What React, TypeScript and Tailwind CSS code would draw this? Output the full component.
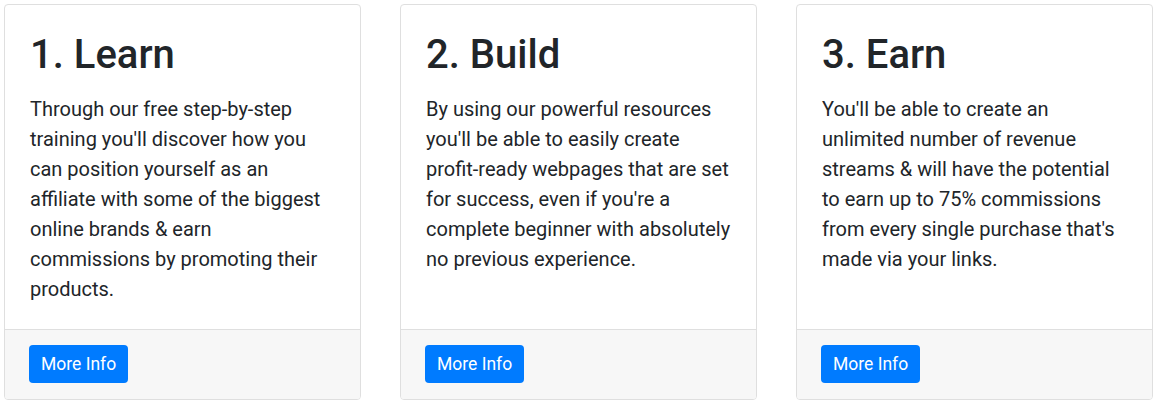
const STEPS = [
  {
    title: "1. Learn",
    text: "Through our free step-by-step training you'll discover how you can position yourself as an affiliate with some of the biggest online brands & earn commissions by promoting their products.",
  },
  {
    title: "2. Build",
    text: "By using our powerful resources you'll be able to easily create profit-ready webpages that are set for success, even if you're a complete beginner with absolutely no previous experience.",
  },
  {
    title: "3. Earn",
    text: "You'll be able to create an unlimited number of revenue streams & will have the potential to earn up to 75% commissions from every single purchase that's made via your links.",
  },
];

export default function App() {
  return (
    <div className="bg-white min-h-[405px] pt-[4px] pl-[4px] pr-[3px] text-[#212529] font-['Roboto',sans-serif]">
      <div className="grid grid-cols-3 gap-[39px]">
        {STEPS.map((step) => (
          <div
            key={step.title}
            className="flex flex-col border border-[#dfdfdf] rounded-[4px] bg-white overflow-hidden"
          >
            <div className="flex-1 px-[25px] pt-[26px] pb-[25px]">
              <h2 className="text-[40px] leading-[48px] font-medium mb-[15px]">{step.title}</h2>
              <p className="text-[20px] leading-[30px]">{step.text}</p>
            </div>
            <div className="border-t border-[#dfdfdf] bg-[#f7f7f7] px-[24px] pt-[15px] pb-[16px]">
              <button className="h-[38px] px-[12px] rounded-[4px] bg-[#007bff] text-white text-[17.5px]">
                More Info
              </button>
            </div>
          </div>
        ))}
      </div>
    </div>
  );
}
